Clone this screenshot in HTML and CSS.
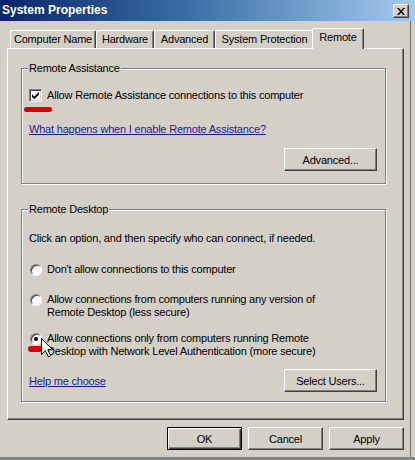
FILE: index.html
```html
<!DOCTYPE html>
<html lang="en">
<head>
    <meta charset="UTF-8">
    <meta name="viewport" content="width=device-width, initial-scale=1.0">
    <title>System Properties</title>
    <link rel="stylesheet" href="styles.css">
</head>
<body>
    <div class="window">
        <div class="titlebar">
            <span class="title">System Properties</span>
            <button class="close-btn" aria-label="Close">
                <svg width="8" height="7" viewBox="0 0 8 7">
                    <path d="M0 0h2l2 2.4 2-2.4h2L5 3.5 8 7H6L4 4.6 2 7H0l3-3.5z" fill="#000"/>
                </svg>
            </button>
        </div>

        <div class="client">
            <div class="tabs">
                <div class="tab tab-name">Computer Name</div>
                <div class="tab tab-hardware">Hardware</div>
                <div class="tab tab-advanced">Advanced</div>
                <div class="tab tab-protection">System Protection</div>
                <div class="tab tab-remote active">Remote</div>
            </div>

            <div class="pane">
                <fieldset class="group group-assist">
                    <legend>Remote Assistance</legend>
                    <label class="check-row">
                        <span class="checkbox">
                            <svg width="7" height="7" viewBox="0 0 7 7">
                                <path d="M0 2.2l2.3 2.3L7 0v2.6L2.3 7.2 0 4.9z" fill="#000"/>
                            </svg>
                        </span>
                        Allow Remote Assistance connections to this computer
                    </label>
                    <div class="link-row"><a href="#" class="link">What happens when I enable Remote Assistance?</a></div>
                    <div class="btn-row">
                        <button class="btn btn-wide">Advanced...</button>
                    </div>
                </fieldset>

                <fieldset class="group group-desktop">
                    <legend>Remote Desktop</legend>
                    <p class="intro">Click an option, and then specify who can connect, if needed.</p>
                    <label class="radio-row radio-first">
                        <span class="radio"></span>
                        <span>Don't allow connections to this computer</span>
                    </label>
                    <label class="radio-row radio-second">
                        <span class="radio"></span>
                        <span>Allow connections from computers running any version of<br>Remote Desktop (less secure)</span>
                    </label>
                    <label class="radio-row radio-third">
                        <span class="radio selected"></span>
                        <span>Allow connections only from computers running Remote<br>Desktop with Network Level Authentication (more secure)</span>
                    </label>
                    <div class="btn-row split">
                        <a href="#" class="link">Help me choose</a>
                        <button class="btn btn-wide">Select Users...</button>
                    </div>
                </fieldset>
            </div>

            <div class="dialog-buttons">
                <button class="btn default">OK</button>
                <button class="btn">Cancel</button>
                <button class="btn">Apply</button>
            </div>
        </div>

        <!-- red marks and the mouse pointer drawn over the dialog -->
        <span class="marker marker-check"></span>
        <span class="marker marker-radio"></span>
        <svg class="pointer" width="13" height="20" viewBox="0 0 13 20">
            <path d="M0.5 0.5V16.5L4.5 12.7L7.3 18.8L9.6 17.8L6.8 11.7H11.8Z" fill="#fff" stroke="#000" stroke-width="1" stroke-linejoin="miter"/>
        </svg>
    </div>
</body>
</html>
```

FILE: styles.css
```css
body {
    margin: 0;
    padding: 0;
    font-family: "Liberation Sans", Arial, sans-serif;
    font-size: 11px;
    letter-spacing: -0.2px;
    color: #000;
    background-color: #d4d0c8;
}
.window {
    position: relative;
    width: 415px;
    height: 457px;
    overflow: hidden;
    background-color: #d4d0c8;
    border-bottom: 3px solid #858585;
}
.titlebar {
    height: 21px;
    display: flex;
    justify-content: space-between;
    align-items: center;
    padding: 0 6px 0 2px;
    background: linear-gradient(to right, #0a246a, #3a6ea5 45%, #a6caf0);
}
.title {
    color: #fff;
    font-weight: bold;
    font-size: 12px;
    letter-spacing: 0;
    line-height: 21px;
}
.close-btn {
    width: 16px;
    height: 14px;
    padding: 0;
    margin-top: 1px;
    display: flex;
    align-items: center;
    justify-content: center;
    background-color: #d4d0c8;
    border: 1px solid;
    border-color: #fff #404040 #404040 #fff;
    box-shadow: inset -1px -1px #808080;
}
.client {
    width: 411px;
    height: 436px;
    padding: 7px 0 0 7px;
    box-sizing: border-box;
    border-right: 1px solid #6e6e6e;
}
.tabs {
    display: flex;
    align-items: flex-end;
    height: 20px;
    padding-left: 3px;
}
.tab {
    height: 18px;
    box-sizing: border-box;
    line-height: 17px;
    text-align: center;
    background-color: #d4d0c8;
    border-top: 1px solid #fff;
    border-left: 1px solid #fff;
    border-right: 1px solid #404040;
    border-radius: 2px 2px 0 0;
    box-shadow: inset -1px 0 #808080;
}
.tab-name { width: 86px; }
.tab-hardware { width: 58px; }
.tab-advanced { width: 61px; }
.tab-protection { width: 99px; }
.tab-remote { width: 52px; }
.tab.active {
    position: relative;
    z-index: 1;
    height: 21px;
    margin: 0 -2px -1px;
}
.pane {
    width: 397px;
    height: 372px;
    box-sizing: border-box;
    padding: 13px 17px 0 13px;
    border: 1px solid;
    border-color: #fff #404040 #404040 #fff;
    box-shadow: inset -1px -1px #808080;
}
.group {
    margin: 0;
    padding: 0 8px 0 7px;
    min-width: 0;
    border: 1px solid #808080;
    box-shadow: inset 1px 1px #fff, 1px 1px #fff;
}
.group legend {
    padding: 0 1px;
    margin-left: -1px;
    line-height: 13px;
    background-color: #d4d0c8;
}
.group-assist {
    padding-top: 14px;
    padding-bottom: 12px;
}
.group-desktop {
    margin-top: 19px;
    padding-top: 16px;
    padding-bottom: 9px;
}
.check-row {
    display: flex;
    align-items: center;
    height: 13px;
    line-height: 13px;
}
.checkbox {
    width: 13px;
    height: 13px;
    box-sizing: border-box;
    margin-right: 5px;
    display: flex;
    align-items: center;
    justify-content: center;
    background-color: #fff;
    border: 1px solid;
    border-color: #808080 #fff #fff #808080;
    box-shadow: inset 1px 1px #404040, inset -1px -1px #d4d0c8;
}
.link-row {
    margin-top: 21px;
    line-height: 13px;
}
.link {
    color: #1b1ba0;
    text-decoration: underline;
}
.btn-row {
    display: flex;
    justify-content: flex-end;
    align-items: center;
    margin-top: 12px;
}
.btn-row.split {
    justify-content: space-between;
    margin-top: 11px;
}
.btn {
    width: 75px;
    height: 23px;
    padding: 0;
    font-family: inherit;
    font-size: 11px;
    letter-spacing: -0.2px;
    color: #000;
    background-color: #d4d0c8;
    border: 1px solid;
    border-color: #fff #404040 #404040 #fff;
    box-shadow: inset -1px -1px #808080;
}
.btn-wide {
    width: 93px;
}
.btn.default {
    border-color: #000;
    box-shadow: inset 1px 1px #fff, inset -1px -1px #404040, inset -2px -2px #808080;
}
.intro {
    margin: 0;
    line-height: 13px;
}
.radio-row {
    display: flex;
    align-items: flex-start;
    line-height: 13px;
}
.radio-first { margin-top: 18px; }
.radio-second { margin-top: 17px; }
.radio-third { margin-top: 13px; }
.radio {
    position: relative;
    width: 12px;
    height: 12px;
    box-sizing: border-box;
    margin: 1px 5px 0 1px;
    flex-shrink: 0;
    border-radius: 50%;
    background-color: #fff;
    border: 1px solid;
    border-color: #808080 #fff #fff #808080;
    box-shadow: inset 1px 1px #404040;
}
.radio.selected::after {
    content: "";
    position: absolute;
    left: 3px;
    top: 3px;
    width: 4px;
    height: 4px;
    border-radius: 50%;
    background-color: #000;
}
.dialog-buttons {
    width: 397px;
    margin-top: 7px;
    display: flex;
    justify-content: flex-end;
    gap: 6px;
}
.marker {
    position: absolute;
    background-color: #d80000;
    border-radius: 3px;
}
.marker-check {
    left: 24px;
    top: 107px;
    width: 28px;
    height: 5px;
}
.marker-radio {
    left: 28px;
    top: 346px;
    width: 14px;
    height: 6px;
}
.pointer {
    position: absolute;
    left: 41px;
    top: 338px;
}
```
